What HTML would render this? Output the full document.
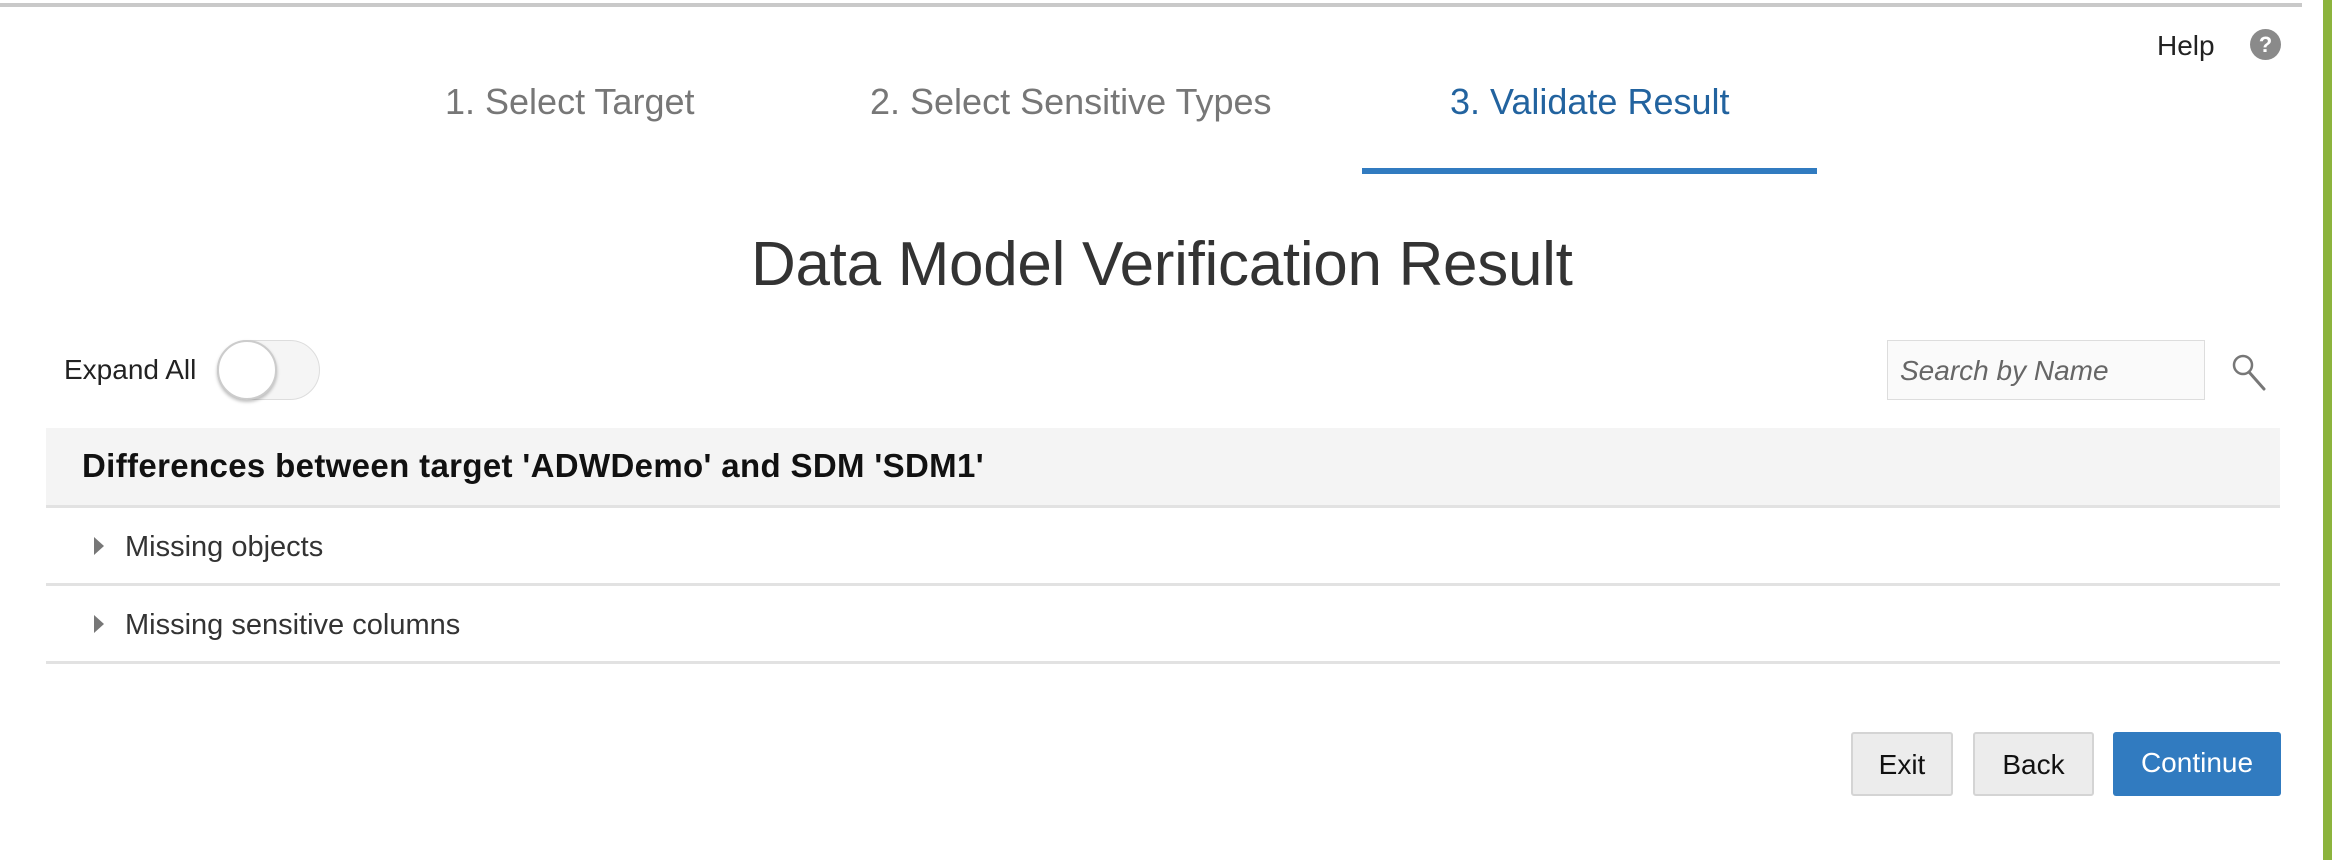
<!DOCTYPE html>
<html><head><meta charset="utf-8"><style>
html,body{margin:0;padding:0;}
body{width:2332px;height:860px;position:relative;background:#fff;font-family:"Liberation Sans",sans-serif;overflow:hidden;}
.a{position:absolute;white-space:nowrap;}
.tab{font-size:36px;color:#777;top:81px;}
.line{position:absolute;left:46px;width:2234px;height:3px;background:#e2e2e2;}
.row{font-size:29px;color:#333;}
.tri{position:absolute;width:0;height:0;border-top:9px solid transparent;border-bottom:9px solid transparent;border-left:10px solid #777;}
.btn{position:absolute;top:732px;height:64px;box-sizing:border-box;font-size:28px;text-align:center;line-height:62px;border-radius:3px;}
</style></head><body>
<div style="position:absolute;left:0;top:3px;width:2302px;height:4px;background:#c9c9c9"></div>
<div style="position:absolute;left:2323px;top:0;width:9px;height:860px;background:#8cb43c"></div>
<div class="a" style="left:2157px;top:30px;font-size:28px;color:#222">Help</div>
<div class="a" style="left:2250px;top:29px;width:31px;height:31px;border-radius:50%;background:#8a8a8a;color:#fff;font-size:22px;font-weight:bold;text-align:center;line-height:31px">?</div>
<div class="a tab" style="left:445px">1. Select Target</div>
<div class="a tab" style="left:870px">2. Select Sensitive Types</div>
<div class="a tab" style="left:1450px;color:#22639f">3. Validate Result</div>
<div style="position:absolute;left:1362px;top:168px;width:455px;height:6px;background:#317bc0"></div>
<div class="a" style="left:751px;top:229px;font-size:62px;color:#333;letter-spacing:-0.3px">Data Model Verification Result</div>
<div class="a" style="left:64px;top:354px;font-size:28px;color:#222">Expand All</div>
<div style="position:absolute;left:217px;top:340px;width:103px;height:60px;border-radius:30px;background:#f5f5f5;border:1px solid #ddd;box-sizing:border-box"></div>
<div style="position:absolute;left:217px;top:340px;width:60px;height:60px;border-radius:50%;background:#fff;border:2px solid #ccc;box-sizing:border-box;box-shadow:0 2px 3px rgba(0,0,0,.25)"></div>
<div style="position:absolute;left:1887px;top:340px;width:318px;height:60px;border:1px solid #ddd;background:#fafafa;box-sizing:border-box"></div>
<div class="a" style="left:1900px;top:355px;font-size:28px;color:#666;font-style:italic">Search by Name</div>
<svg style="position:absolute;left:2230px;top:352px" width="40" height="42" viewBox="0 0 40 42"><circle cx="13" cy="13" r="9" fill="none" stroke="#777" stroke-width="2.5"/><line x1="19" y1="20" x2="34" y2="37" stroke="#777" stroke-width="3" stroke-linecap="round"/></svg>
<div style="position:absolute;left:46px;top:428px;width:2234px;height:78px;background:#f4f4f4"></div>
<div class="a" style="left:82px;top:447px;font-size:33px;font-weight:bold;color:#111;letter-spacing:0.35px">Differences between target 'ADWDemo' and SDM 'SDM1'</div>
<div class="line" style="top:505px"></div>
<div class="tri" style="left:94px;top:537px"></div>
<div class="a row" style="left:125px;top:531px">Missing objects</div>
<div class="line" style="top:583px"></div>
<div class="tri" style="left:94px;top:615px"></div>
<div class="a row" style="left:125px;top:609px">Missing sensitive columns</div>
<div class="line" style="top:661px"></div>
<div class="btn" style="left:1851px;width:102px;background:#ececec;border:2px solid #d4d4d4;color:#111">Exit</div>
<div class="btn" style="left:1973px;width:121px;background:#ececec;border:2px solid #d4d4d4;color:#111">Back</div>
<div class="btn" style="left:2113px;width:168px;background:#317bc0;color:#fff">Continue</div>
</body></html>
